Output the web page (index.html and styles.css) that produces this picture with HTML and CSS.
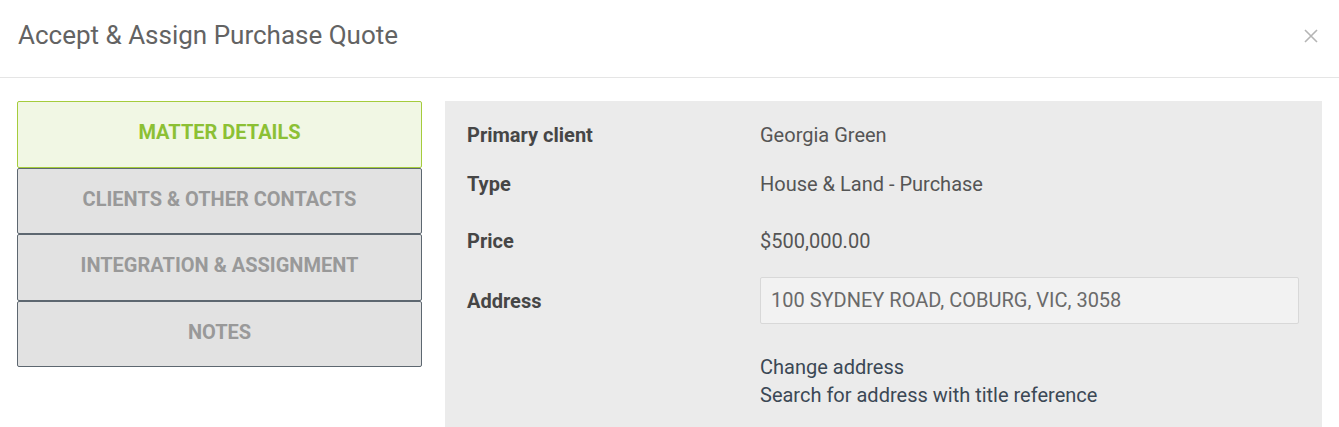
FILE: index.html
```html
<!DOCTYPE html>
<html>
<head>
<meta charset="utf-8">
<link rel="stylesheet" href="styles.css">
</head>
<body>
<div class="modal">
  <header class="modal-header">
    <h1 class="title">Accept &amp; Assign Purchase Quote</h1>
    <button class="close" aria-label="Close">
      <svg width="16" height="16" viewBox="0 0 16 16"><path d="M2 2L14 14M14 2L2 14" stroke="#b5b5b5" stroke-width="1.6" fill="none"/></svg>
    </button>
  </header>
  <div class="modal-body">
    <nav class="tabs">
      <div class="tab active">MATTER DETAILS</div>
      <div class="tab">CLIENTS &amp; OTHER CONTACTS</div>
      <div class="tab">INTEGRATION &amp; ASSIGNMENT</div>
      <div class="tab">NOTES</div>
    </nav>
    <section class="panel">
      <div class="row r1"><div class="label">Primary client</div><div class="value">Georgia Green</div></div>
      <div class="row r2"><div class="label">Type</div><div class="value">House &amp; Land - Purchase</div></div>
      <div class="row r3"><div class="label">Price</div><div class="value">$500,000.00</div></div>
      <div class="row r4"><div class="label">Address</div><div class="value"><div class="input">100 SYDNEY ROAD, COBURG, VIC, 3058</div></div></div>
      <div class="links">
        <a class="link">Change address</a>
        <a class="link">Search for address with title reference</a>
      </div>
    </section>
  </div>
</div>
</body>
</html>
```
FILE: styles.css
```css
* { box-sizing: border-box; }
html, body { margin: 0; padding: 0; background: #fff; }
body { font-family: Roboto, "Noto Sans", Arial, sans-serif; overflow: hidden; }
.modal { width: 1339px; }
.modal-header {
  height: 78px;
  border-bottom: 1px solid #e5e5e5;
  display: flex;
  align-items: center;
  justify-content: space-between;
  padding: 0 20px 0 18px;
}
.title {
  margin: 0;
  font-size: 26px;
  font-weight: 400;
  color: #636363;
  position: relative;
  top: -4px;
}
.close {
  border: 0; background: none; padding: 0; width: 16px; height: 16px;
  display: flex; position: relative; top: -3px;
}
.modal-body {
  display: flex;
  gap: 23px;
  padding: 23px 17px 0 17px;
}
.tabs { width: 405px; display: flex; flex-direction: column; flex: none; }
.tab {
  height: 66.5px;
  display: flex; align-items: center; justify-content: center;
  background: #e2e2e2;
  border: 1px solid #5d6770;
  border-radius: 2px;
  color: #999;
  font-weight: 700;
  font-size: 20px;
  padding-bottom: 4px;
}
.tab.active {
  background: #f1f7e4;
  border-color: #a5cc3c;
  color: #8cc034;
}
.panel {
  width: 877px;
  flex: none;
  background: #ebebeb;
  padding: 20px 23px 18px 22px;
  min-height: 326px;
}
.row { display: grid; grid-template-columns: 293px 1fr; align-items: center; line-height: 28px; font-size: 20px; }
.label { font-weight: 700; color: #464646; }
.value { color: #555; }
.r1 { margin-bottom: 21px; }
.r2 { margin-bottom: 29px; }
.r3 { margin-bottom: 22px; }
.input {
  height: 47px;
  background: #f2f2f2;
  border: 1px solid #d8d8d8;
  border-radius: 2px;
  padding: 0 11px 1px 10px;
  display: flex; align-items: center;
  color: #6a6a6a;
  font-size: 20px;
}
.links { margin-top: 29px; padding-left: 293px; display: flex; flex-direction: column; }
.link { color: #3b4855; font-size: 20px; line-height: 28px; }
```
